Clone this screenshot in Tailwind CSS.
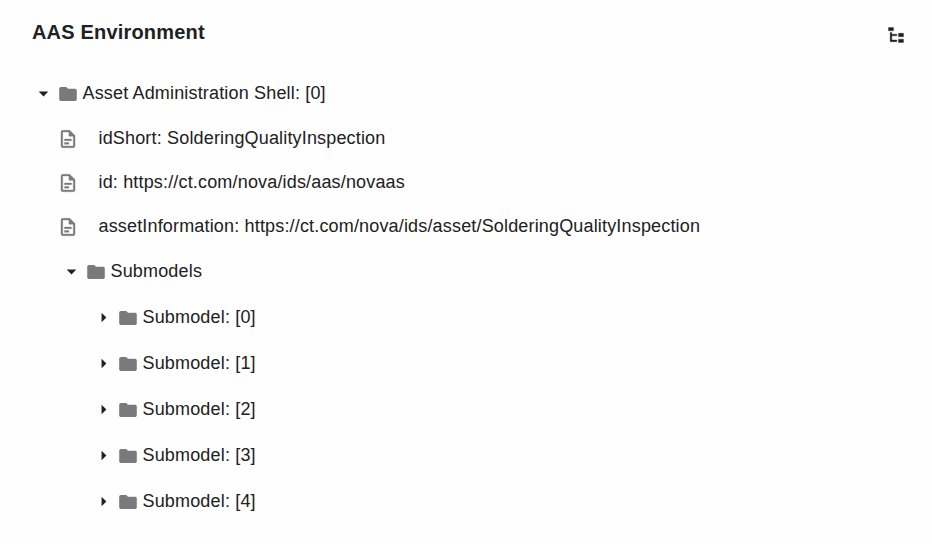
<!DOCTYPE html>
<html lang="en"><head><meta charset="utf-8"><title>AAS Environment</title>
<script src="https://cdn.jsdelivr.net/npm/@tailwindcss/browser@4"></script></head>
<body class="bg-[#fdfefd] text-[#212121] font-['Liberation_Sans',Arial,sans-serif] text-[18px] w-[932px] h-[544px] overflow-hidden">
<svg class="hidden"><defs>
<symbol id="folder" viewBox="0 0 24 24"><path d="M10 4H4c-1.100 0-2 .9-2 2v12c0 1.100.9 2 2 2h16c1.100 0 2-.9 2-2V8c0-1.100-.9-2-2-2h-8l-2-2z"/></symbol>
<symbol id="doc" viewBox="0 0 24 24"><path stroke="#7a7a7a" stroke-width=".35" d="M6 2a2 2 0 0 0-2 2v16a2 2 0 0 0 2 2h12a2 2 0 0 0 2-2V8l-6-6H6m0 2h7v5h5v11H6V4m2 8v2h8v-2H8m0 4v2h5v-2H8z"/></symbol>
<symbol id="down" viewBox="0 0 24 24"><path d="M7 10l5 5 5-5H7z"/></symbol>
<symbol id="right" viewBox="0 0 24 24"><path d="M10 17l5-5-5-5v10z"/></symbol>
</defs></svg>
<header class="flex justify-between pl-8 pr-[26px] pt-5 h-[70px]">
<h1 class="text-[20px] leading-6 font-bold whitespace-nowrap tracking-[0.18px]">AAS Environment</h1>
<svg class="size-5 mt-[5px]" viewBox="0 0 24 24" fill="currentColor" stroke="currentColor" stroke-width=".4"><path d="M3 3h6v4H3V3m12 7h6v4h-6v-4m0 7h6v4h-6v-4m-2-4H7v5h6v2H5V9h2v2h6v2z"/></svg>
</header>
<main class="leading-[22px] whitespace-nowrap tracking-[0.166px]">
<div class="flex items-center h-[46px] pl-8"><svg class="size-[23px] fill-current"><use href="#down"/></svg><svg class="size-[22px] ml-[2px] mt-[2px] fill-[#7a7a7a]" viewBox="-.5 -.5 25 25"><use href="#folder" width="24" height="24"/></svg><span class="ml-[3.500px]">Asset Administration Shell: [0]</span></div>
<div class="flex items-center h-11 pl-[57px]"><svg class="size-[22px] mt-[2px] fill-[#7a7a7a]" viewBox="-.5 -.5 25 25"><use href="#doc" width="24" height="24"/></svg><span class="ml-[19.500px]">idShort: SolderingQualityInspection</span></div>
<div class="flex items-center h-11 pl-[57px]"><svg class="size-[22px] mt-[2px] fill-[#7a7a7a]" viewBox="-.5 -.5 25 25"><use href="#doc" width="24" height="24"/></svg><span class="ml-[19.500px]">id: https://ct.com/nova/ids/aas/novaas</span></div>
<div class="flex items-center h-11 pl-[57px]"><svg class="size-[22px] mt-[2px] fill-[#7a7a7a]" viewBox="-.5 -.5 25 25"><use href="#doc" width="24" height="24"/></svg><span class="ml-[19.500px]">assetInformation: https://ct.com/nova/ids/asset/SolderingQualityInspection</span></div>
<div class="flex items-center h-[46px] pl-[60px]"><svg class="size-[23px] fill-current"><use href="#down"/></svg><svg class="size-[22px] ml-[2px] mt-[2px] fill-[#7a7a7a]" viewBox="-.5 -.5 25 25"><use href="#folder" width="24" height="24"/></svg><span class="ml-[3.500px]">Submodels</span></div>
<div class="flex items-center h-[46px] pl-[92px]"><svg class="size-[23px] fill-current"><use href="#right"/></svg><svg class="size-[22px] ml-[2px] mt-[2px] fill-[#7a7a7a]" viewBox="-.5 -.5 25 25"><use href="#folder" width="24" height="24"/></svg><span class="ml-[3.500px]">Submodel: [0]</span></div>
<div class="flex items-center h-[46px] pl-[92px]"><svg class="size-[23px] fill-current"><use href="#right"/></svg><svg class="size-[22px] ml-[2px] mt-[2px] fill-[#7a7a7a]" viewBox="-.5 -.5 25 25"><use href="#folder" width="24" height="24"/></svg><span class="ml-[3.500px]">Submodel: [1]</span></div>
<div class="flex items-center h-[46px] pl-[92px]"><svg class="size-[23px] fill-current"><use href="#right"/></svg><svg class="size-[22px] ml-[2px] mt-[2px] fill-[#7a7a7a]" viewBox="-.5 -.5 25 25"><use href="#folder" width="24" height="24"/></svg><span class="ml-[3.500px]">Submodel: [2]</span></div>
<div class="flex items-center h-[46px] pl-[92px]"><svg class="size-[23px] fill-current"><use href="#right"/></svg><svg class="size-[22px] ml-[2px] mt-[2px] fill-[#7a7a7a]" viewBox="-.5 -.5 25 25"><use href="#folder" width="24" height="24"/></svg><span class="ml-[3.500px]">Submodel: [3]</span></div>
<div class="flex items-center h-[46px] pl-[92px]"><svg class="size-[23px] fill-current"><use href="#right"/></svg><svg class="size-[22px] ml-[2px] mt-[2px] fill-[#7a7a7a]" viewBox="-.5 -.5 25 25"><use href="#folder" width="24" height="24"/></svg><span class="ml-[3.500px]">Submodel: [4]</span></div>
</main>
</body></html>
